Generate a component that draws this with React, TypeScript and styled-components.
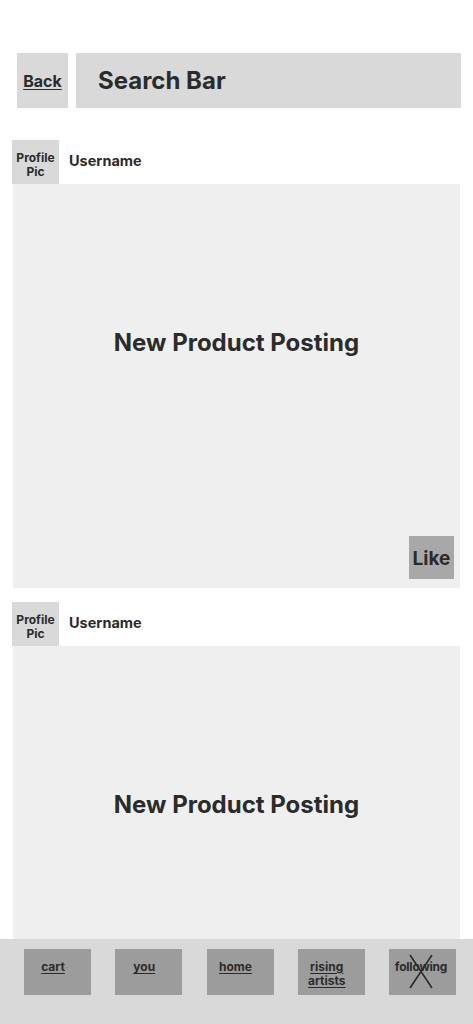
import React from "react";
import styled, { createGlobalStyle } from "styled-components";

const Global = createGlobalStyle`
  html, body { margin: 0; padding: 0; background: #ffffff; }
  body { font-family: Inter, "Noto Sans", sans-serif; color: #2b2b2b; overflow: hidden; }
`;

const Page = styled.div`
  padding-top: 53px;
  height: 1024px;
  box-sizing: border-box;
  overflow: hidden;
`;

const Header = styled.header`
  display: flex;
  gap: 8px;
  padding: 0 12px 0 17px;
  height: 55px;
`;

const BackButton = styled.a`
  width: 51px;
  flex: none;
  background: #d9d9d9;
  display: flex;
  align-items: center;
  justify-content: center;
  font-size: 16px;
  font-weight: 700;
  color: #2b2b2b;
  text-decoration: underline;
  text-underline-offset: 2px;
`;

const SearchBar = styled.div`
  flex: 1;
  background: #d9d9d9;
  display: flex;
  align-items: center;
  padding-left: 22px;
  font-size: 24px;
  font-weight: 700;
  color: #2b2b2b;
`;

const Feed = styled.main`
  margin-top: 32px;
  padding: 0 13px 0 12px;
  display: flex;
  flex-direction: column;
  gap: 14px;
`;

const Post = styled.article`
  display: flex;
  flex-direction: column;
`;

const ProfileRow = styled.div`
  display: flex;
  align-items: center;
  height: 44px;
`;

const ProfilePic = styled.div`
  width: 47px;
  height: 44px;
  box-sizing: border-box;
  padding-top: 6px;
  background: #d9d9d9;
  display: flex;
  align-items: center;
  justify-content: center;
  text-align: center;
  font-size: 12px;
  line-height: 14px;
  font-weight: 700;
`;

const Username = styled.span`
  margin: 0 0 4px 10px;
  font-size: 14.5px;
  font-weight: 700;
`;

const Card = styled.div`
  margin-left: 1px;
  height: 404px;
  background: #efefef;
  display: flex;
  flex-direction: column;
  align-items: center;
  padding-top: 144px;
  box-sizing: border-box;
`;

const Title = styled.h2`
  margin: 0;
  font-size: 24px;
  line-height: 29px;
  font-weight: 700;
`;

const LikeButton = styled.button`
  margin: auto 6px 9px 0;
  align-self: flex-end;
  width: 45px;
  height: 43px;
  border: none;
  padding: 2px 0 0;
  background: #a8a8a8;
  font-family: inherit;
  font-size: 19px;
  font-weight: 700;
  color: #2b2b2b;
`;

const Nav = styled.nav`
  position: fixed;
  left: 0;
  right: 0;
  bottom: 0;
  height: 85px;
  background: #d9d9d9;
  display: flex;
  justify-content: space-between;
  align-items: flex-start;
  padding: 10px 17px 0 24px;
  box-sizing: border-box;
`;

const NavButton = styled.a<{ $crossed?: boolean }>`
  position: relative;
  width: 67px;
  height: 46px;
  box-sizing: border-box;
  background: #9c9c9c;
  padding: 11px ${(p) => (p.$crossed ? "0" : "9px")} 0 0;
  text-align: center;
  font-size: 12px;
  line-height: 14px;
  font-weight: 700;
  color: #2b2b2b;
  text-decoration: underline;
  text-underline-offset: 2px;
  white-space: pre-line;
  ${(p) => (p.$crossed ? "text-decoration: none; padding-right: 3px; letter-spacing: -0.2px;" : "")}
`;

const Cross = styled.svg`
  position: absolute;
  left: 20px;
  top: 5px;
  width: 24px;
  height: 35px;
`;

const posts = [1, 2];
const navItems = ["cart", "you", "home", "rising\nartists"];

export default function App() {
  return (
    <>
      <Global />
      <Page>
        <Header>
          <BackButton>Back</BackButton>
          <SearchBar>Search Bar</SearchBar>
        </Header>
        <Feed>
          {posts.map((id) => (
            <Post key={id}>
              <ProfileRow>
                <ProfilePic>
                  Profile
                  <br />
                  Pic
                </ProfilePic>
                <Username>Username</Username>
              </ProfileRow>
              <Card>
                <Title>New Product Posting</Title>
                {id === 1 && <LikeButton>Like</LikeButton>}
              </Card>
            </Post>
          ))}
        </Feed>
        <Nav>
          {navItems.map((n) => (
            <NavButton key={n}>{n}</NavButton>
          ))}
          <NavButton $crossed>
            following
            <Cross viewBox="0 0 24 35">
              <line x1="1" y1="1" x2="23" y2="34" stroke="#2b2b2b" strokeWidth="1.6" />
              <line x1="23" y1="1" x2="1" y2="34" stroke="#2b2b2b" strokeWidth="1.6" />
            </Cross>
          </NavButton>
        </Nav>
      </Page>
    </>
  );
}
